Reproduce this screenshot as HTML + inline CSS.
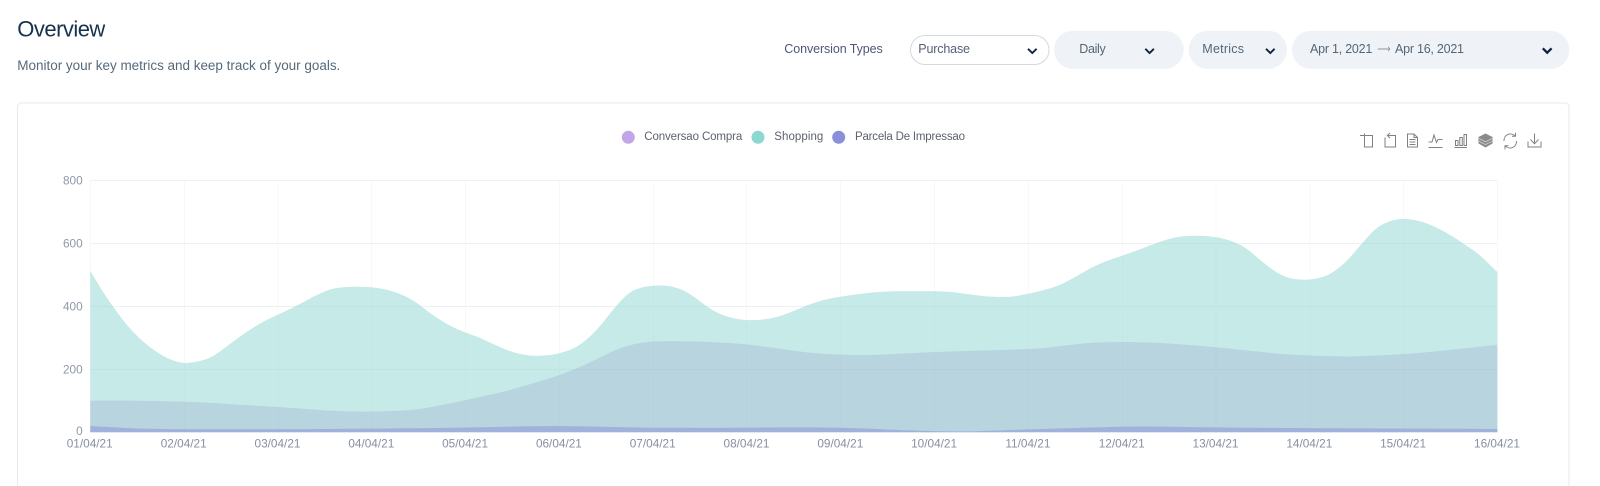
<!DOCTYPE html>
<html>
<head>
<meta charset="utf-8">
<title>Overview</title>
<style>
html,body{margin:0;padding:0;width:1600px;height:486px;overflow:hidden;background:#fff}
svg{display:block}
text{font-family:"Liberation Sans",sans-serif}
</style>
</head>
<body>
<svg width="1600" height="486" viewBox="0 0 1600 486" xmlns="http://www.w3.org/2000/svg">
<rect width="1600" height="486" fill="#fff"/>

<!-- Header -->
<text x="17.3" y="36.5" font-size="22" fill="#16324c" textLength="88" lengthAdjust="spacing">Overview</text>
<text x="17.3" y="70" font-size="13.5" fill="#566a7a" textLength="323" lengthAdjust="spacing">Monitor your key metrics and keep track of your goals.</text>

<!-- Controls -->
<text x="784.3" y="53" font-size="12.5" fill="#4f5775" textLength="98.4" lengthAdjust="spacing">Conversion Types</text>
<rect x="910.5" y="35.5" width="138.5" height="29" rx="14.5" fill="#fff" stroke="#d5d8de"/>
<text x="918.3" y="53" font-size="12.5" fill="#545f75" textLength="51.7" lengthAdjust="spacing">Purchase</text>
<path d="M1028 48.8l4.3 4.2 4.3-4.2" fill="none" stroke="#14233f" stroke-width="1.9"/>

<rect x="1054" y="30.7" width="129.7" height="38.3" rx="19" fill="#eff3f8"/>
<text x="1079.3" y="53" font-size="12.5" fill="#546676" textLength="26.4" lengthAdjust="spacing">Daily</text>
<path d="M1145.3 48.8l4.3 4.2 4.3-4.2" fill="none" stroke="#14233f" stroke-width="1.9"/>

<rect x="1188.7" y="30.7" width="98.3" height="38.3" rx="19" fill="#eff3f8"/>
<text x="1202.3" y="53" font-size="12.5" fill="#546676" textLength="41.7" lengthAdjust="spacing">Metrics</text>
<path d="M1266 48.8l4.3 4.2 4.3-4.2" fill="none" stroke="#14233f" stroke-width="1.9"/>

<rect x="1292" y="30.7" width="277.3" height="38.3" rx="19" fill="#eff3f8"/>
<text x="1310" y="53" font-size="12.5" fill="#546676" textLength="62.3" lengthAdjust="spacing">Apr 1, 2021</text>
<text x="1377.3" y="53" font-size="12" fill="#8a97a5" textLength="13.4" lengthAdjust="spacingAndGlyphs">⟶</text>
<text x="1395" y="53" font-size="12.5" fill="#546676" textLength="69" lengthAdjust="spacing">Apr 16, 2021</text>
<path d="M1542.8 48.3l4.4 4.4 4.4-4.4" fill="none" stroke="#14233f" stroke-width="2.3"/>

<!-- Card -->
<path d="M17.5 490V107a4 4 0 0 1 4-4H1565a4 4 0 0 1 4 4V490" fill="#fff" stroke="#e8eaed"/>

<!-- Legend -->
<circle cx="628.3" cy="137.3" r="6.5" fill="#c3a6e8"/>
<text x="644.3" y="140" font-size="11.5" fill="#5c626d" textLength="98" lengthAdjust="spacing">Conversao Compra</text>
<circle cx="758" cy="137.3" r="6.5" fill="#8cd8d0"/>
<text x="774.3" y="140" font-size="11.5" fill="#5c626d" textLength="49" lengthAdjust="spacing">Shopping</text>
<circle cx="838.7" cy="137.3" r="6.5" fill="#8a8fd9"/>
<text x="855" y="140" font-size="11.5" fill="#5c626d" textLength="110" lengthAdjust="spacing">Parcela De Impressao</text>

<!-- Toolbox icons -->
<g fill="none" stroke="#808080" stroke-width="1">
<path d="M1360 135.5h12.5v11.5h-8V133.500"/>
<path d="M1385 137.500V147h10.500v-11.500h-8M1390 133l-2.700 2.500 2.700 2.500"/>
<path d="M1407.500 134h6.500l3.500 3.500V147h-10zM1414 134v3.500h3.500M1409.500 139.500h6M1409.500 142h6M1409.500 144.500h6"/>
<path d="M1428.500 147.500h14M1428.500 142h3.500l2-7 2.500 7.500 1.500-3h4.500"/>
<path d="M1454.500 147.500h12.500M1455.500 140.500h2.500v5h-2.500zM1459.800 137.500h2.500v8h-2.500zM1464 134.500h2.500v11H1464z"/>
<path d="M1485.500 133.500l7 3.500v6.500l-7 4-7-4V137z" fill="#8a8a8a" stroke="none"/>
<path d="M1479 138.500l6.500 3.300 6.500-3.300M1479 141.300l6.500 3.300 6.500-3.300" stroke="#d4d4d4" stroke-width="0.8"/>
<path d="M1504 141a6.500 6.500 0 0 1 11-5.200M1516.500 141a6.500 6.500 0 0 1-11 5.200M1515.500 132.800v3.500h-3.500M1505 149.200v-3.500h3.500"/>
<path d="M1528 141.500v5.500h13v-5.500M1534.500 133.500v10M1530.500 139.500l4 4.300 4-4.300"/>
</g>

<!-- Grid -->
<g stroke="#f7f8f9" stroke-width="1">
<path d="M90.500 180V432M184.500 180V432M278 180V432M371.500 180V432M465.500 180V432M559.500 180V432M653.500 180V432M746.500 180V432M840.500 180V432M934.500 180V432M1028.500 180V432M1122.500 180V432M1216 180V432M1310 180V432M1403.500 180V432M1497.500 180V432"/>
</g>
<g stroke="#eff0f2" stroke-width="1">
<path d="M90 180.500H1497.500M90 243.500H1497.500M90 306.500H1497.500M90 369.500H1497.500"/>
</g>

<!-- Shopping area -->
<path fill="#8dd6d0" fill-opacity="0.5" d="M90.300 432.300L90.300 270.700L95.100 279Q100 287.300 106.600 297.300Q113.300 307.300 121.600 318.300Q130 329.300 138.300 337.100Q146.700 345 155 350.800Q163.300 356.700 170 359.300Q176.700 362 181.700 362.600Q186.700 363.300 193.300 362.300Q200 361.300 206.600 359Q213.300 356.700 221.600 350.300Q230 344 238.300 337.800Q246.700 331.700 255 326.500Q263.300 321.300 271.600 317.600Q280 314 288.300 309.800Q296.700 305.700 305 301.200Q313.300 296.700 321.600 292.800Q330 289 338.300 287.800Q346.700 286.700 355 286.700Q363.300 286.700 371.600 287.300Q380 288 388.300 290.100Q396.700 292.300 405 296.100Q413.300 300 421.600 306.600Q430 313.300 438.300 318.800Q446.700 324.300 455 328.100Q463.300 332 471.600 334.800Q480 337.700 488.300 341.700Q496.700 345.700 505 349.200Q513.300 352.700 521.600 354.300Q530 356 538.300 355.800Q546.700 355.700 553.300 354.500Q560 353.300 566.600 351.100Q573.300 349 580 344.500Q586.700 340 593.300 333.300Q600 326.700 608.300 315.800Q616.700 305 623.300 298.300Q630 291.700 636.600 289.200Q643.300 286.700 653.300 285.800Q663.300 285 671.600 286.600Q680 288.300 686.600 292.100Q693.300 296 701.600 302.500Q710 309 716.600 312.300Q723.300 315.700 731.600 317.800Q740 320 748.300 320.100Q756.700 320.300 765 319.300Q773.300 318.300 781.600 315.500Q790 312.700 798.300 309Q806.700 305.300 815 302.500Q823.300 299.700 831.600 298.200Q840 296.700 850 295.200Q860 293.700 870 292.700Q880 291.700 893.300 291.300Q906.700 291 926.700 291.100Q946.700 291.300 956.700 292.600Q966.700 294 976.700 295.300Q986.700 296.700 995 296.800Q1003.300 297 1008.300 296.800Q1013.300 296.700 1023.300 294.800Q1033.300 293 1045 289.800Q1056.700 286.700 1065 282.500Q1073.300 278.300 1081.600 273.300Q1090 268.300 1098.300 264.500Q1106.700 260.700 1116.700 257.500Q1126.700 254.300 1136.700 250.500Q1146.700 246.700 1156.700 243Q1166.700 239.300 1175 237.500Q1183.300 235.700 1191.600 235.700Q1200 235.700 1208.300 236.300Q1216.700 237 1225 239.100Q1233.300 241.300 1240 244.800Q1246.700 248.300 1255 255.500Q1263.300 262.700 1270 267.700Q1276.700 272.700 1283.300 275.700Q1290 278.700 1296.600 279.300Q1303.300 280 1310 279.500Q1316.700 279 1323.300 276.800Q1330 274.700 1338.300 268.200Q1346.700 261.700 1355 251.700Q1363.300 241.700 1370 234.500Q1376.700 227.300 1383.300 224Q1390 220.700 1396.600 219.500Q1403.300 218.300 1411.600 219.500Q1420 220.700 1428.300 224Q1436.700 227.300 1445 232Q1453.300 236.700 1460 241.200Q1466.700 245.700 1473.300 250.300Q1480 255 1488.600 263.500L1497.300 272L1497.300 432.300Z"/>

<!-- Middle area -->
<path fill="#8c8fc8" fill-opacity="0.24" d="M90.300 432.300L90.300 400.700Q113.300 400.300 130 400.600Q146.700 401 165 401.300Q183.300 401.700 198.300 402.300Q213.300 403 230 404.100Q246.700 405.300 263.300 406.100Q280 407 296.600 408.300Q313.300 409.700 326.600 410.500Q340 411.300 355 411.500Q370 411.700 383.300 411.300Q396.700 411 408.300 410.100Q420 409.300 433.300 406.600Q446.700 404 463.300 400.600Q480 397.300 496.600 393.300Q513.300 389.300 526.600 385.300Q540 381.300 550 378.100Q560 375 570 371.100Q580 367.300 588.300 363.300Q596.700 359.300 605 355Q613.300 350.700 621.600 347.700Q630 344.700 641.600 342.800Q653.300 341 671.600 341.100Q690 341.300 703.300 341.800Q716.700 342.300 731.700 343.300Q746.700 344.300 760 346Q773.300 347.700 790 350.200Q806.700 352.700 823.300 353.800Q840 355 856.600 355.100Q873.300 355.300 890 354.300Q906.700 353.300 923.300 352.500Q940 351.700 960 351.200Q980 350.700 1000 350Q1020 349.300 1033.300 348.600Q1046.700 348 1056.700 346.600Q1066.700 345.300 1078.300 344Q1090 342.700 1103.300 342.300Q1116.700 342 1133.300 342.100Q1150 342.300 1165 343.300Q1180 344.300 1198.300 345.800Q1216.700 347.300 1233.300 349Q1250 350.700 1266.600 352.500Q1283.300 354.300 1300 355.100Q1316.700 356 1333.300 356.300Q1350 356.700 1366.600 356Q1383.300 355.300 1400 354.300Q1416.700 353.300 1433.300 351.600Q1450 350 1465 348.300Q1480 346.700 1488.600 345.700L1497.300 344.700L1497.300 432.300Z"/>

<!-- Bottom area -->
<path fill="#8a8fd9" fill-opacity="0.5" d="M90.300 432.300L90.300 426Q113 427.300 126.500 428Q140 428.700 161.500 429Q183 429.300 231.500 429.300Q280 429.300 325 429Q370 428.700 408 428.300Q446.700 428 480 427.300Q513 426.700 526.500 426.300Q540 426 565 426.100Q590 426.300 615 427Q640 427.700 673 427.800Q706.700 428 753 427.600Q800 427.300 820 427.500Q840 427.700 856 428.200Q873 428.700 883 429.300Q893 430 926 430.900Q960 431.800 980 431.100Q1000 430.500 1016 429.900Q1033 429.300 1066 428.300Q1100 427.300 1121 426.800Q1143 426.300 1171 426.800Q1200 427.300 1233 427.600Q1267 428 1333 428.200Q1400 428.500 1448 428.700L1497.300 429L1497.300 432.300Z"/>

<!-- Y axis labels -->
<g font-size="11.800" fill="#8f98aa" text-anchor="end">
<text x="82.700" y="184.500">800</text>
<text x="82.700" y="247.500">600</text>
<text x="82.700" y="310.500">400</text>
<text x="82.700" y="373.500">200</text>
<text x="82.700" y="435">0</text>
</g>

<!-- X axis labels -->
<g font-size="11.800" fill="#868fa2" text-anchor="middle">
<text x="89.700" y="447.500">01/04/21</text>
<text x="183.700" y="447.500">02/04/21</text>
<text x="277.500" y="447.500">03/04/21</text>
<text x="371.300" y="447.500">04/04/21</text>
<text x="465.100" y="447.500">05/04/21</text>
<text x="558.900" y="447.500">06/04/21</text>
<text x="652.700" y="447.500">07/04/21</text>
<text x="746.500" y="447.500">08/04/21</text>
<text x="840.300" y="447.500">09/04/21</text>
<text x="934.100" y="447.500">10/04/21</text>
<text x="1027.900" y="447.500">11/04/21</text>
<text x="1121.700" y="447.500">12/04/21</text>
<text x="1215.500" y="447.500">13/04/21</text>
<text x="1309.300" y="447.500">14/04/21</text>
<text x="1403.100" y="447.500">15/04/21</text>
<text x="1497" y="447.500">16/04/21</text>
</g>
</svg>
</body>
</html>
